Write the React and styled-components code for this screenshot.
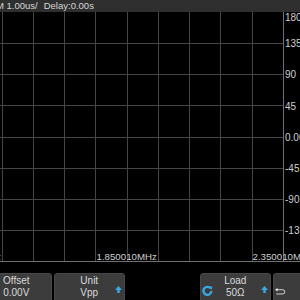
import React from 'react';
import styled, { createGlobalStyle } from 'styled-components';

const GlobalStyle = createGlobalStyle`
  html, body {
    margin: 0;
    padding: 0;
    background: #000;
  }
`;

const Screen = styled.div`
  width: 300px;
  height: 300px;
  overflow: hidden;
  background: #000;
  display: flex;
  flex-direction: column;
  font-family: 'Liberation Sans', Arial, sans-serif;
`;

const StatusBar = styled.div`
  height: 12px;
  flex: none;
  background: #2f2f2f;
  color: #d6d6d6;
  font-size: 9.5px;
  line-height: 12px;
  white-space: nowrap;
  margin-left: -4px;
  display: flex;
  gap: 6px;
`;

const Plot = styled.svg`
  display: block;
  flex: none;
  width: 300px;
  height: 261px;
`;

const AxisLabel = styled.text`
  fill: #cfcfcf;
  font-size: ${(p) => p.$size || 10}px;
  font-family: 'Liberation Sans', Arial, sans-serif;
`;

const MenuBar = styled.div`
  flex: none;
  display: flex;
  gap: 2.5px;
  margin-left: -19px;
`;

const MenuButton = styled.div`
  flex: none;
  width: 70.5px;
  height: 30px;
  box-sizing: border-box;
  border-radius: 3px;
  background: ${(p) => (p.$empty ? 'transparent' : '#3c3c3c')};
  border: 1px solid ${(p) => (p.$empty ? 'transparent' : '#484848')};
  display: grid;
  grid-template-columns: 12px 1fr 12px;
  align-items: center;
  padding-top: 1px;
  color: #dadada;
`;

const Caption = styled.div`
  grid-column: 2;
  align-self: start;
  text-align: center;
  font-size: 10px;
  line-height: 12.4px;
  white-space: nowrap;
`;

const IconSlot = styled.div`
  display: flex;
  justify-content: ${(p) => (p.$side === 'left' ? 'flex-start' : 'flex-end')};
  padding: ${(p) => (p.$side === 'left' ? '4px 0 0 1px' : '2px 2px 0 0')};
  grid-column: ${(p) => (p.$side === 'left' ? 1 : 3)};
  grid-row: 1;
`;

const BLUE = '#3aa9e2';

const KnobArrow = () => (
  <svg width="7" height="8" viewBox="0 0 7 8">
    <polygon points="0,4 3.5,0 7,4" fill={BLUE} />
    <rect x="2.3" y="4" width="2.4" height="3" fill={BLUE} />
  </svg>
);

const KnobTurn = () => (
  <svg width="11" height="11" viewBox="0 0 11 11">
    <path
      d="M8.4 3.2 A4 4 0 1 0 9.4 6"
      fill="none"
      stroke={BLUE}
      strokeWidth="2.4"
    />
    <polygon points="6.6,1.6 10.4,1.4 9.6,5" fill={BLUE} />
  </svg>
);

const ReturnIcon = () => (
  <svg width="26" height="18" viewBox="0 0 26 18">
    <polygon points="0,6 6,2 6,10" fill="#f0f0f0" />
    <path d="M5 6 H18 A5 5 0 0 1 18 16 H3" fill="none" stroke="#f0f0f0" strokeWidth="2" />
  </svg>
);

const gridX = Array.from({ length: 9 }, (_, i) => Math.round(1.7 + 31.25 * i) + 0.5);
const gridY = [31.5, 62.5, 93.5, 125.5, 156.5, 187.5, 218.5];
const AXIS_X = 283.5;
const BOTTOM_Y = 249.5;

const yLabels = [
  { text: '180', y: 5 },
  { text: '135', y: 31 },
  { text: '90', y: 62 },
  { text: '45', y: 94 },
  { text: '0.00', y: 125 },
  { text: '-45', y: 156 },
  { text: '-90', y: 187 },
  { text: '-135', y: 218 },
];

const xLabels = [
  { text: '1.350010MHz', x: -59.5 },
  { text: '1.850010MHz', x: 96.5 },
  { text: '2.350010MHz', x: 252.5 },
];

const Graticule = () => (
  <Plot viewBox="0 0 300 261">
    {gridX.map((x) => (
      <line key={`v${x}`} x1={x} y1="0" x2={x} y2={BOTTOM_Y} stroke="#454545" strokeWidth="1" />
    ))}
    {gridY.map((y) => (
      <line key={`h${y}`} x1="0" y1={y} x2={AXIS_X} y2={y} stroke="#454545" strokeWidth="1" />
    ))}
    <line x1={AXIS_X} y1="0" x2={AXIS_X} y2={BOTTOM_Y} stroke="#707070" strokeWidth="1" />
    <line x1="0" y1={BOTTOM_Y} x2="300" y2={BOTTOM_Y} stroke="#707070" strokeWidth="1" />
    {yLabels.map((l) => (
      <AxisLabel key={l.text} x="285" y={l.y + 3.6}>
        {l.text}
      </AxisLabel>
    ))}
    {xLabels.map((l) => (
      <AxisLabel key={l.text} x={l.x} y="247.5" $size={9.7}>
        {l.text}
      </AxisLabel>
    ))}
  </Plot>
);

const App = () => {
  return (
    <Screen>
      <GlobalStyle />
      <StatusBar>
        <span>M 1.00us/</span>
        <span>Delay:0.00s</span>
      </StatusBar>
      <Graticule />
      <MenuBar>
        <MenuButton>
          <Caption>
            Offset
            <br />
            0.00V
          </Caption>
        </MenuButton>
        <MenuButton>
          <Caption>
            Unit
            <br />
            Vpp
          </Caption>
          <IconSlot $side="right">
            <KnobArrow />
          </IconSlot>
        </MenuButton>
        <MenuButton $empty />
        <MenuButton>
          <IconSlot $side="left">
            <KnobTurn />
          </IconSlot>
          <Caption>
            Load
            <br />
            50Ω
          </Caption>
          <IconSlot $side="right">
            <KnobArrow />
          </IconSlot>
        </MenuButton>
        <MenuButton>
          <IconSlot $side="left">
            <ReturnIcon />
          </IconSlot>
        </MenuButton>
      </MenuBar>
    </Screen>
  );
};

export default App;
